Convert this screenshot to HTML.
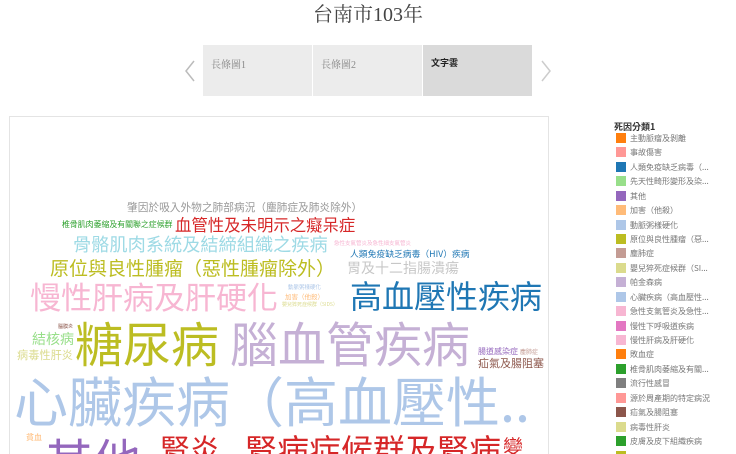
<!DOCTYPE html>
<html style="overflow:hidden;height:454px"><head><meta charset="utf-8"><style>
body{margin:0;width:736px;height:454px;overflow:hidden;background:#fff;font-family:"Liberation Sans","Noto Sans CJK TC",sans-serif;position:relative}
.a{position:absolute;white-space:nowrap;line-height:1}
.w{position:absolute;white-space:nowrap;line-height:1;font-family:"Noto Sans CJK TC",sans-serif}
.tab{position:absolute;top:45px;height:51px;width:109px;background:#ececec;font-family:"Liberation Serif","Noto Serif CJK SC",serif;font-size:10px;color:#888;box-sizing:border-box;padding:11px 0 0 8px}
.lg{position:absolute;left:616px;width:10px;height:10px}
.lt{position:absolute;left:630px;font-size:8px;color:#777;line-height:1;white-space:nowrap;font-family:"Noto Sans CJK TC",sans-serif}
</style></head><body>
<div class="a" style="left:0;width:736px;text-align:center;top:5px;font-size:20px;color:#444;font-family:'Liberation Serif','Noto Serif CJK SC',serif">台南市103年</div>
<svg style="position:absolute;left:184px;top:60px" width="12" height="22"><path d="M10 1 L2 11 L10 21" fill="none" stroke="#bbb" stroke-width="1.5"/></svg>
<svg style="position:absolute;left:540px;top:60px" width="12" height="22"><path d="M2 1 L10 11 L2 21" fill="none" stroke="#ccc" stroke-width="1.5"/></svg>
<div class="tab" style="left:203px">長條圖1</div>
<div class="tab" style="left:313px">長條圖2</div>
<div class="tab" style="left:423px;background:#dadada;color:#222;font-weight:bold;font-family:'Noto Sans CJK TC',sans-serif;font-size:9px">文字雲</div>
<div style="position:absolute;left:9px;top:116px;width:538px;height:340px;border:1px solid #e4e4e4;border-bottom:none;overflow:hidden">
<div style="position:absolute;left:-10px;top:-117px;width:560px;height:600px">
<div class="w" style="left:127px;top:203px;font-size:10.7px;color:#999">肇因於吸入外物之肺部病況（塵肺症及肺炎除外）</div>
<div class="w" style="left:62px;top:221px;font-size:7.9px;color:#2ca02c">椎骨肌肉萎縮及有關聯之症候群</div>
<div class="w" style="left:175px;top:216px;font-size:16.4px;color:#d62728">血管性及未明示之癡呆症</div>
<div class="w" style="left:73px;top:235px;font-size:18.2px;color:#9edae5">骨骼肌肉系統及結締組織之疾病</div>
<div class="w" style="left:334px;top:241px;font-size:5.5px;color:#f7b6d2">急性支氣管炎及急性細支氣管炎</div>
<div class="w" style="left:350px;top:250px;font-size:8.8px;color:#1f77b4">人類免疫缺乏病毒（HIV）疾病</div>
<div class="w" style="left:50px;top:258px;font-size:19px;color:#bcbd22">原位與良性腫瘤（惡性腫瘤除外）</div>
<div class="w" style="left:347px;top:261px;font-size:14px;color:#c7c7c7">胃及十二指腸潰瘍</div>
<div class="w" style="left:30px;top:280px;font-size:31px;color:#f7b6d2">慢性肝病及肝硬化</div>
<div class="w" style="left:288px;top:285px;font-size:5.5px;color:#aec7e8">動脈粥樣硬化</div>
<div class="w" style="left:285px;top:293px;font-size:6.5px;color:#ffbb78">加害（他殺）</div>
<div class="w" style="left:282px;top:302px;font-size:5px;color:#dbdb8d">嬰兒猝死症候群（SIDS）</div>
<div class="w" style="left:350px;top:279px;font-size:32px;color:#1f77b4">高血壓性疾病</div>
<div class="w" style="left:58px;top:324px;font-size:5px;color:#8c564b">腦膜炎</div>
<div class="w" style="left:32px;top:332px;font-size:14px;color:#98df8a">結核病</div>
<div class="w" style="left:17px;top:350px;font-size:11.2px;color:#dbdb8d">病毒性肝炎</div>
<div class="w" style="left:75px;top:317px;font-size:48px;color:#bcbd22">糖尿病</div>
<div class="w" style="left:230px;top:317px;font-size:48px;color:#c5b0d5">腦血管疾病</div>
<div class="w" style="left:478px;top:348px;font-size:8px;color:#9467bd">腸道感染症</div>
<div class="w" style="left:520px;top:349px;font-size:6px;color:#c49c94">塵肺症</div>
<div class="w" style="left:478px;top:358px;font-size:11px;color:#8c564b">疝氣及腸阻塞</div>
<div class="w" style="left:14px;top:372px;font-size:54px;color:#aec7e8">心臟疾病（高血壓性..</div>
<div class="w" style="left:26px;top:434px;font-size:8px;color:#ffbb78">貧血</div>
<div class="w" style="left:45px;top:434px;font-size:48px;color:#9467bd">其他</div>
<div class="w" style="left:160px;top:433px;font-size:30px;color:#d62728">腎炎</div>
<div class="w" style="left:245px;top:433px;font-size:32px;color:#d62728">腎病症候群及腎病</div>
<div class="w" style="left:503px;top:436px;font-size:20px;color:#d62728">變</div>
</div></div>
<div class="a" style="left:614px;top:122px;font-size:9px;color:#333;font-weight:bold;font-family:'Noto Sans CJK TC',sans-serif">死因分類1</div>
<div class="lg" style="top:133px;background:#ff7f0e"></div><div class="lt" style="top:135px">主動脈瘤及剝離</div>
<div class="lg" style="top:147px;background:#ff9896"></div><div class="lt" style="top:149px">事故傷害</div>
<div class="lg" style="top:162px;background:#1f77b4"></div><div class="lt" style="top:164px">人類免疫缺乏病毒（...</div>
<div class="lg" style="top:176px;background:#98df8a"></div><div class="lt" style="top:178px">先天性畸形變形及染...</div>
<div class="lg" style="top:191px;background:#9467bd"></div><div class="lt" style="top:193px">其他</div>
<div class="lg" style="top:205px;background:#ffbb78"></div><div class="lt" style="top:207px">加害（他殺）</div>
<div class="lg" style="top:220px;background:#aec7e8"></div><div class="lt" style="top:222px">動脈粥樣硬化</div>
<div class="lg" style="top:234px;background:#bcbd22"></div><div class="lt" style="top:236px">原位與良性腫瘤（惡...</div>
<div class="lg" style="top:248px;background:#c49c94"></div><div class="lt" style="top:250px">塵肺症</div>
<div class="lg" style="top:263px;background:#dbdb8d"></div><div class="lt" style="top:265px">嬰兒猝死症候群（SI...</div>
<div class="lg" style="top:277px;background:#c5b0d5"></div><div class="lt" style="top:279px">帕金森病</div>
<div class="lg" style="top:292px;background:#aec7e8"></div><div class="lt" style="top:294px">心臟疾病（高血壓性...</div>
<div class="lg" style="top:306px;background:#f7b6d2"></div><div class="lt" style="top:308px">急性支氣管炎及急性...</div>
<div class="lg" style="top:321px;background:#e377c2"></div><div class="lt" style="top:323px">慢性下呼吸道疾病</div>
<div class="lg" style="top:335px;background:#f7b6d2"></div><div class="lt" style="top:337px">慢性肝病及肝硬化</div>
<div class="lg" style="top:349px;background:#ff7f0e"></div><div class="lt" style="top:351px">敗血症</div>
<div class="lg" style="top:364px;background:#2ca02c"></div><div class="lt" style="top:366px">椎骨肌肉萎縮及有關...</div>
<div class="lg" style="top:378px;background:#7f7f7f"></div><div class="lt" style="top:380px">流行性感冒</div>
<div class="lg" style="top:393px;background:#ff9896"></div><div class="lt" style="top:395px">源於周產期的特定病況</div>
<div class="lg" style="top:407px;background:#8c564b"></div><div class="lt" style="top:409px">疝氣及腸阻塞</div>
<div class="lg" style="top:422px;background:#dbdb8d"></div><div class="lt" style="top:424px">病毒性肝炎</div>
<div class="lg" style="top:436px;background:#2ca02c"></div><div class="lt" style="top:438px">皮膚及皮下組織疾病</div>
<div class="lg" style="top:451px;height:3px;background:#bcbd22"></div>
</body></html>
